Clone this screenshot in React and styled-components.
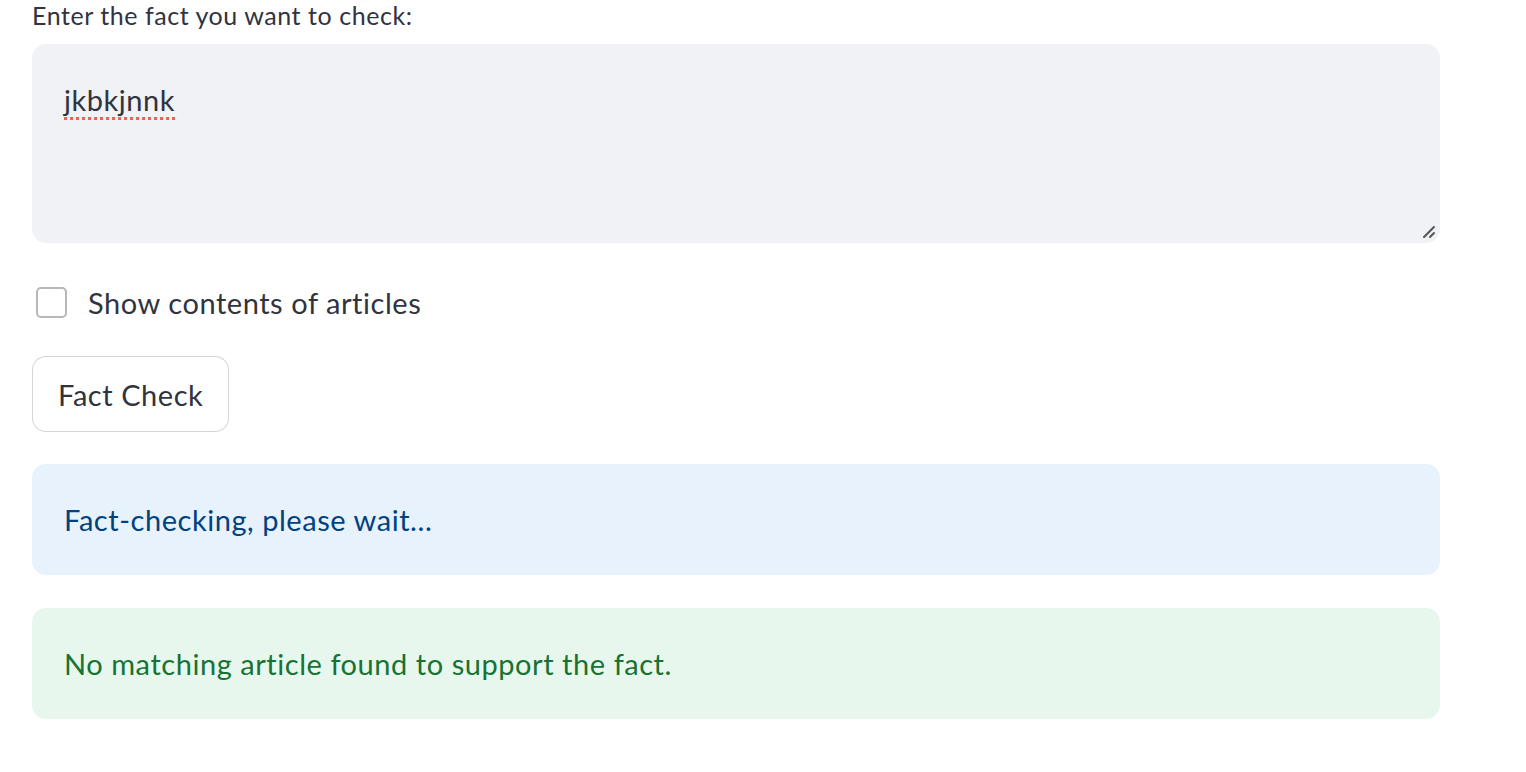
import React from 'react';
import styled, {createGlobalStyle} from "styled-components";

const GlobalStyle = createGlobalStyle`
  body {
    margin: 0;
    background: #ffffff;
    font-family: Lato, "Source Sans Pro", "Noto Sans", sans-serif;
    letter-spacing: 0.55px;
    color: rgb(49, 51, 63);
  }
`;

const Page = styled.div`
  width: 1408px;
  padding-left: 32px;
  display: flex;
  flex-direction: column;
`;

const Label = styled.label`
  font-size: 25px;
  line-height: 30px;
  margin-bottom: 14px;
`;

const TextBox = styled.div`
  position: relative;
  box-sizing: border-box;
  height: 199px;
  padding: 33px 32px;
  background: #f0f2f6;
  border-radius: 14px;
  font-size: 29px;
  line-height: 45px;

  .typo {
    text-decoration: underline dotted #ff5a5a;
    text-decoration-thickness: 3px;
    text-underline-offset: 6px;
  }
`;

const Grip = styled.svg`
  position: absolute;
  right: 3px;
  bottom: 3px;
`;

const CheckRow = styled.label`
  display: flex;
  align-items: center;
  gap: 21px;
  margin-top: 37px;
  padding-left: 4px;
  height: 45px;
  font-size: 29px;
`;

const Box = styled.span`
  box-sizing: border-box;
  width: 31px;
  height: 31px;
  border: 2px solid rgba(49, 51, 63, 0.35);
  border-radius: 5px;
  background: #fff;
`;

const Button = styled.button`
  align-self: flex-start;
  box-sizing: border-box;
  margin-top: 31px;
  height: 76px;
  padding: 0 25px;
  background: #fff;
  border: 1.5px solid rgba(49, 51, 63, 0.2);
  border-radius: 14px;
  font-family: inherit;
  letter-spacing: inherit;
  font-size: 29px;
  color: rgb(49, 51, 63);
`;

const Alert = styled.div`
  margin-top: ${p => p.$gap}px;
  padding: 33px 32px;
  border-radius: 14px;
  font-size: 29px;
  line-height: 45px;
  background: ${p => p.$kind === "info" ? "#e8f2fc" : "#e8f7ed"};
  color: ${p => p.$kind === "info" ? "#004280" : "#177233"};
`;

const App = () => {
    return (
        <>
            <GlobalStyle/>
            <Page>
                <Label>Enter the fact you want to check:</Label>
                <TextBox>
                    <span className="typo">jkbkjnnk</span>
                    <Grip width="16" height="16" viewBox="0 0 16 16">
                        <path d="M3 13 L13 3 M9 13 L13 9" stroke="#555" strokeWidth="2" strokeLinecap="round"/>
                    </Grip>
                </TextBox>
                <CheckRow>
                    <Box/>
                    Show contents of articles
                </CheckRow>
                <Button>Fact Check</Button>
                <Alert $kind="info" $gap={32}>Fact-checking, please wait...</Alert>
                <Alert $kind="success" $gap={33}>No matching article found to support the fact.</Alert>
            </Page>
        </>
    );
};

export default App;
